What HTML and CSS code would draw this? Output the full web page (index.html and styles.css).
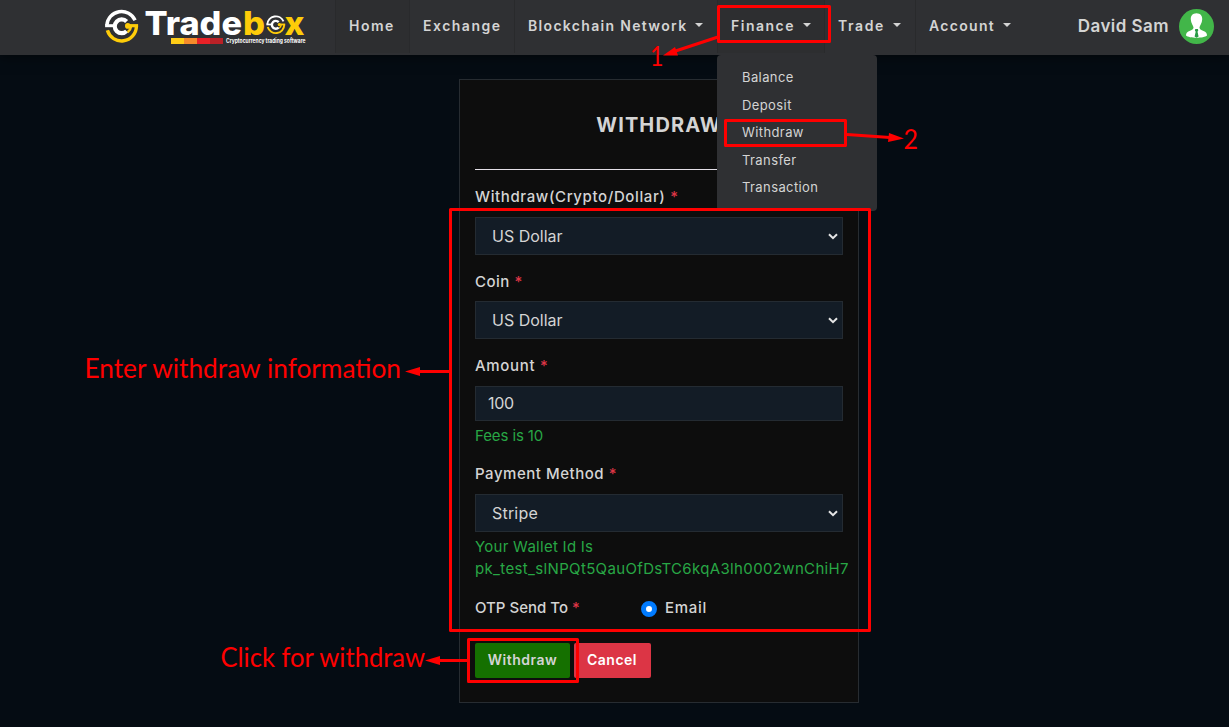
FILE: index.html
```html
<!DOCTYPE html>
<html lang="en">
<head>
<meta charset="utf-8">
<title>Tradebox - Withdraw</title>
<link rel="stylesheet" href="styles.css">
</head>
<body>
<header class="topbar">
  <svg class="logo" width="230" height="55" viewBox="105 0 230 55" role="img" aria-label="Tradebox">
    <defs>
      <g id="mark" fill="none">
        <path stroke="#fff" stroke-width="3.400" d="M-14.800 -1A14.800 14.800 0 0 1 13.500 -6"/>
        <path stroke="#fecc09" stroke-width="3.400" d="M-14.200 4A14.800 14.800 0 0 0 14.800 0"/>
        <path stroke="#fecc09" stroke-width="3.200" d="M16.500 -.6H6"/>
        <path stroke="#fff" stroke-width="3" d="M-16.500 -.6H-7"/>
        <path stroke="#fff" stroke-width="4.200" d="M5 -4.800A6.900 6.900 0 1 0 5 4.800"/>
        <circle cx="6.200" cy="-.4" r="2.800" fill="#fecc09"/>
        <path stroke="#fecc09" stroke-width="2.500" d="M9.500 0A9 9 0 0 1 6 6"/>
      </g>
    </defs>
    <use href="#mark" transform="translate(121.600 26.300)"/>
    <text class="logo-word" x="144.500" y="34.500" fill="#fff" textLength="97.500" lengthAdjust="spacingAndGlyphs">Trade</text>
    <text class="logo-word" x="243" y="34.500" fill="#fecc09" textLength="22" lengthAdjust="spacingAndGlyphs">b</text>
    <use href="#mark" transform="translate(275.800 24.800) scale(.57)"/>
    <text class="logo-word" x="284.500" y="34.500" fill="#fecc09" textLength="20" lengthAdjust="spacingAndGlyphs">x</text>
    <path fill="#fecc17" d="M171 38h13v6h-13z"/><path fill="#f58b2b" d="M184 38h13v6h-13z"/><path fill="#e92127" d="M197 38h13v6h-13z"/><path fill="#b92127" d="M210 38h13v6h-13z"/>
    <text class="logo-tag" x="226" y="43" textLength="79.500" lengthAdjust="spacingAndGlyphs">Cryptocurrency trading software</text>
  </svg>
  <nav class="nav">
    <a class="nav-item home active">Home</a>
    <a class="nav-item exchange">Exchange</a>
    <a class="nav-item network">Blockchain Network<i class="caret"></i></a>
    <div class="nav-item finance active">Finance<i class="caret"></i>
      <div class="dropdown">
        <a>Balance</a><a>Deposit</a><a>Withdraw</a><a>Transfer</a><a>Transaction</a>
      </div>
    </div>
    <a class="nav-item trade">Trade<i class="caret"></i></a>
    <a class="nav-item account">Account<i class="caret"></i></a>
  </nav>
  <div class="user">
    <span class="user-name">David Sam</span>
    <svg width="35" height="35" viewBox="0 0 35 35">
      <circle cx="17.500" cy="17.500" r="17.500" fill="#42b649"/>
      <path fill="#fff" d="M17.500 4.200C21.500 4.200 23.500 7 23.200 10.500C23 14 21 16.500 20.500 18.200C20.300 20 22 21 24.500 22C27 23 28 24 28 26.500C25 29.500 10 29.500 7 26.500C7 24 8 23 10.500 22C13 21 14.700 20 14.500 18.200C14 16.500 12 14 11.800 10.500C11.500 7 13.500 4.200 17.500 4.200Z"/>
      <path fill="#279b45" d="M16.300 20h2.600l.4 1.500-.8 1.200 1.100 4.800-2 1.200-2-1.200 1.100-4.800-.8-1.200z"/>
    </svg>
  </div>
</header>

<main class="card">
  <h1 class="title">WITHDRAW</h1>
  <form class="form">
    <div class="group">
      <div class="label l-crypto">Withdraw(Crypto/Dollar) <b>*</b></div>
      <div class="control select">US Dollar<svg class="chev" width="10" height="7" viewBox="0 0 10 7"><path d="M1 1.200L5 5.200L9 1.200"/></svg></div>
    </div>
    <div class="group tight">
      <div class="label l-coin">Coin <b>*</b></div>
      <div class="control select">US Dollar<svg class="chev" width="10" height="7" viewBox="0 0 10 7"><path d="M1 1.200L5 5.200L9 1.200"/></svg></div>
    </div>
    <div class="group">
      <div class="label l-amount">Amount <b>*</b></div>
      <div class="control input">100</div>
      <div class="help h-fee">Fees is 10</div>
    </div>
    <div class="group">
      <div class="label l-pay">Payment Method <b>*</b></div>
      <div class="control select stripe">Stripe<svg class="chev" width="10" height="7" viewBox="0 0 10 7"><path d="M1 1.200L5 5.200L9 1.200"/></svg></div>
      <div class="help"><span class="h-your">Your Wallet Id Is</span><br><span class="h-id">pk_test_slNPQt5QauOfDsTC6kqA3lh0002wnChiH7</span></div>
    </div>
    <div class="otp">
      <div class="label otp-label">OTP Send To <b>*</b></div>
      <i class="radio"></i>
      <div class="label l-email">Email</div>
    </div>
    <div class="actions">
      <div class="btn green">Withdraw</div>
      <div class="btn red">Cancel</div>
    </div>
  </form>
</main>

<svg class="notes" width="1229" height="727" viewBox="0 0 1229 727">
  <g fill="none" stroke="#f00" stroke-width="3" stroke-linejoin="round">
    <rect x="718.500" y="6.500" width="111" height="35"/>
    <rect x="725.500" y="120.500" width="120" height="25"/>
    <rect x="450.500" y="209.500" width="419" height="421"/>
    <rect x="468.500" y="639.500" width="109" height="42"/>
    <path d="M718 37L674 51.500M847 134.500L890 137.500M450 371.500H417M468 660.500H438"/>
  </g>
  <g fill="#f00">
    <path d="M663 55.500L675 47L678 55.500ZM904 138.500L889 133L888 142ZM405 371.500L420 367V376ZM425 660.500L440 656V665Z"/>
    <text x="650" y="65.500" textLength="13.500" lengthAdjust="spacingAndGlyphs">1</text>
    <text x="903.500" y="148.500" textLength="14.500" lengthAdjust="spacingAndGlyphs">2</text>
    <text x="84.500" y="377.500" textLength="316.500" lengthAdjust="spacingAndGlyphs">Enter withdraw information</text>
    <text x="220.500" y="666.500" textLength="204.500" lengthAdjust="spacingAndGlyphs">Click for withdraw</text>
  </g>
</svg>
</body>
</html>
```
FILE: styles.css
```css
* { box-sizing: border-box; }
html, body { height: 100%; }
body {
  margin: 0;
  position: relative;
  overflow: hidden;
  background: #050c13;
  color: #d4d4d4;
  font-family: "Inter", "Liberation Sans", sans-serif;
}
.topbar {
  display: flex;
  height: 55px;
  padding-left: 105px;
  background: #2f3033;
  box-shadow: 0 2px 12px rgba(0, 0, 0, .5);
}
.logo { flex: none; }
.logo-word { font: 800 33px "Inter", sans-serif; }
.logo-tag { font: 700 5.500px "Inter", sans-serif; fill: #fff; }
.nav { display: flex; height: 53px; }
.nav-item {
  position: relative;
  display: flex;
  align-items: center;
  padding: 0 0 2px 13px;
  border-left: 1px solid #292a2c;
  font-size: 14px;
  font-weight: 600;
  letter-spacing: 1.500px;
  white-space: nowrap;
}
.nav-item.active { background: #2d2e30; }
.home { width: 74px; }
.exchange { width: 105px; }
.network { width: 203px; letter-spacing: 1.320px; }
.finance { width: 107px; }
.trade { width: 91px; letter-spacing: 1.600px; }
.account { width: 109px; letter-spacing: 1.300px; }
.caret {
  position: absolute;
  right: 13px;
  top: 23px;
  border: 4px solid transparent;
  border-top-color: #d4d4d4;
  border-bottom: 0;
}
.network .caret { right: 14px; }
.trade .caret { right: 14px; }
.dropdown {
  position: absolute;
  z-index: 2;
  left: -1px;
  top: 55px;
  width: 160px;
  height: 156px;
  padding: 9px 25px;
  border-radius: 4px;
  background: #2f3033;
  font-size: 13px;
  font-weight: 400;
  letter-spacing: .4px;
  line-height: 27.500px;
}
.dropdown a { display: block; }
.user {
  display: flex;
  flex: 1;
  align-items: center;
  justify-content: flex-end;
  gap: 10px;
  padding: 0 15px 2px 0;
}
.user-name { font-size: 17px; font-weight: 600; letter-spacing: .450px; padding-bottom: 1px; }
.card {
  width: 400px;
  height: 624px;
  margin: 24px 0 0 459px;
  padding: 0 15px;
  border: 1px solid #272c31;
  background: #0d0d0d;
}
.title {
  height: 90px;
  margin: 0 0 16px;
  border-bottom: 1px solid #e3dfe7;
  font-size: 20px;
  font-weight: 700;
  letter-spacing: 1.100px;
  line-height: 91px;
  text-align: center;
}
.form { display: flex; flex-direction: column; gap: 16px; }
.label {
  font-size: 15px;
  font-weight: 500;
  line-height: 22px;
}
.label b { color: #dc3545; font-weight: 500; }
.l-crypto { letter-spacing: .620px; }
.l-coin { letter-spacing: .500px; }
.l-amount { letter-spacing: .700px; }
.l-pay { letter-spacing: .530px; }
.l-email { letter-spacing: .700px; }
.control {
  display: flex;
  align-items: center;
  height: 38px;
  margin-top: 9px;
  padding: 0 4px 0 16px;
  border: 1px solid #242b32;
  background: #131c26;
  font-size: 16px;
}
.tight .control { margin-top: 8px; }
.input { height: 35px; padding: 0 0 1px 12px; letter-spacing: -.300px; }
.stripe { letter-spacing: .200px; }
.chev { margin-left: auto; fill: none; stroke: #e5e5e5; stroke-width: 2; }
.help {
  margin-top: 4px;
  color: #28a745;
  font-size: 15px;
  line-height: 22px;
  white-space: nowrap;
}
.h-fee { letter-spacing: -.100px; }
.h-your { letter-spacing: .270px; }
.h-id { letter-spacing: .350px; }
.otp { display: flex; align-items: center; margin-top: 1px; }
.otp-label { width: 166px; }
.radio {
  width: 16px;
  height: 16px;
  margin: 2px 8px 0 0;
  border: 5px solid #007bff;
  border-radius: 50%;
  background: #fff;
}
.actions { display: flex; gap: 4px; margin-top: 8px; }
.btn {
  width: 95px;
  height: 35px;
  border-radius: 2px;
  font-size: 14px;
  font-weight: 600;
  letter-spacing: .500px;
  line-height: 34px;
  text-align: center;
}
.green { background: #157000; }
.red { width: 77px; padding-right: 1px; background: #dc3545; color: #fff; }
.notes {
  position: absolute;
  z-index: 5;
  left: 0;
  top: 0;
  font: 400 26px "Lato", sans-serif;
}
```
